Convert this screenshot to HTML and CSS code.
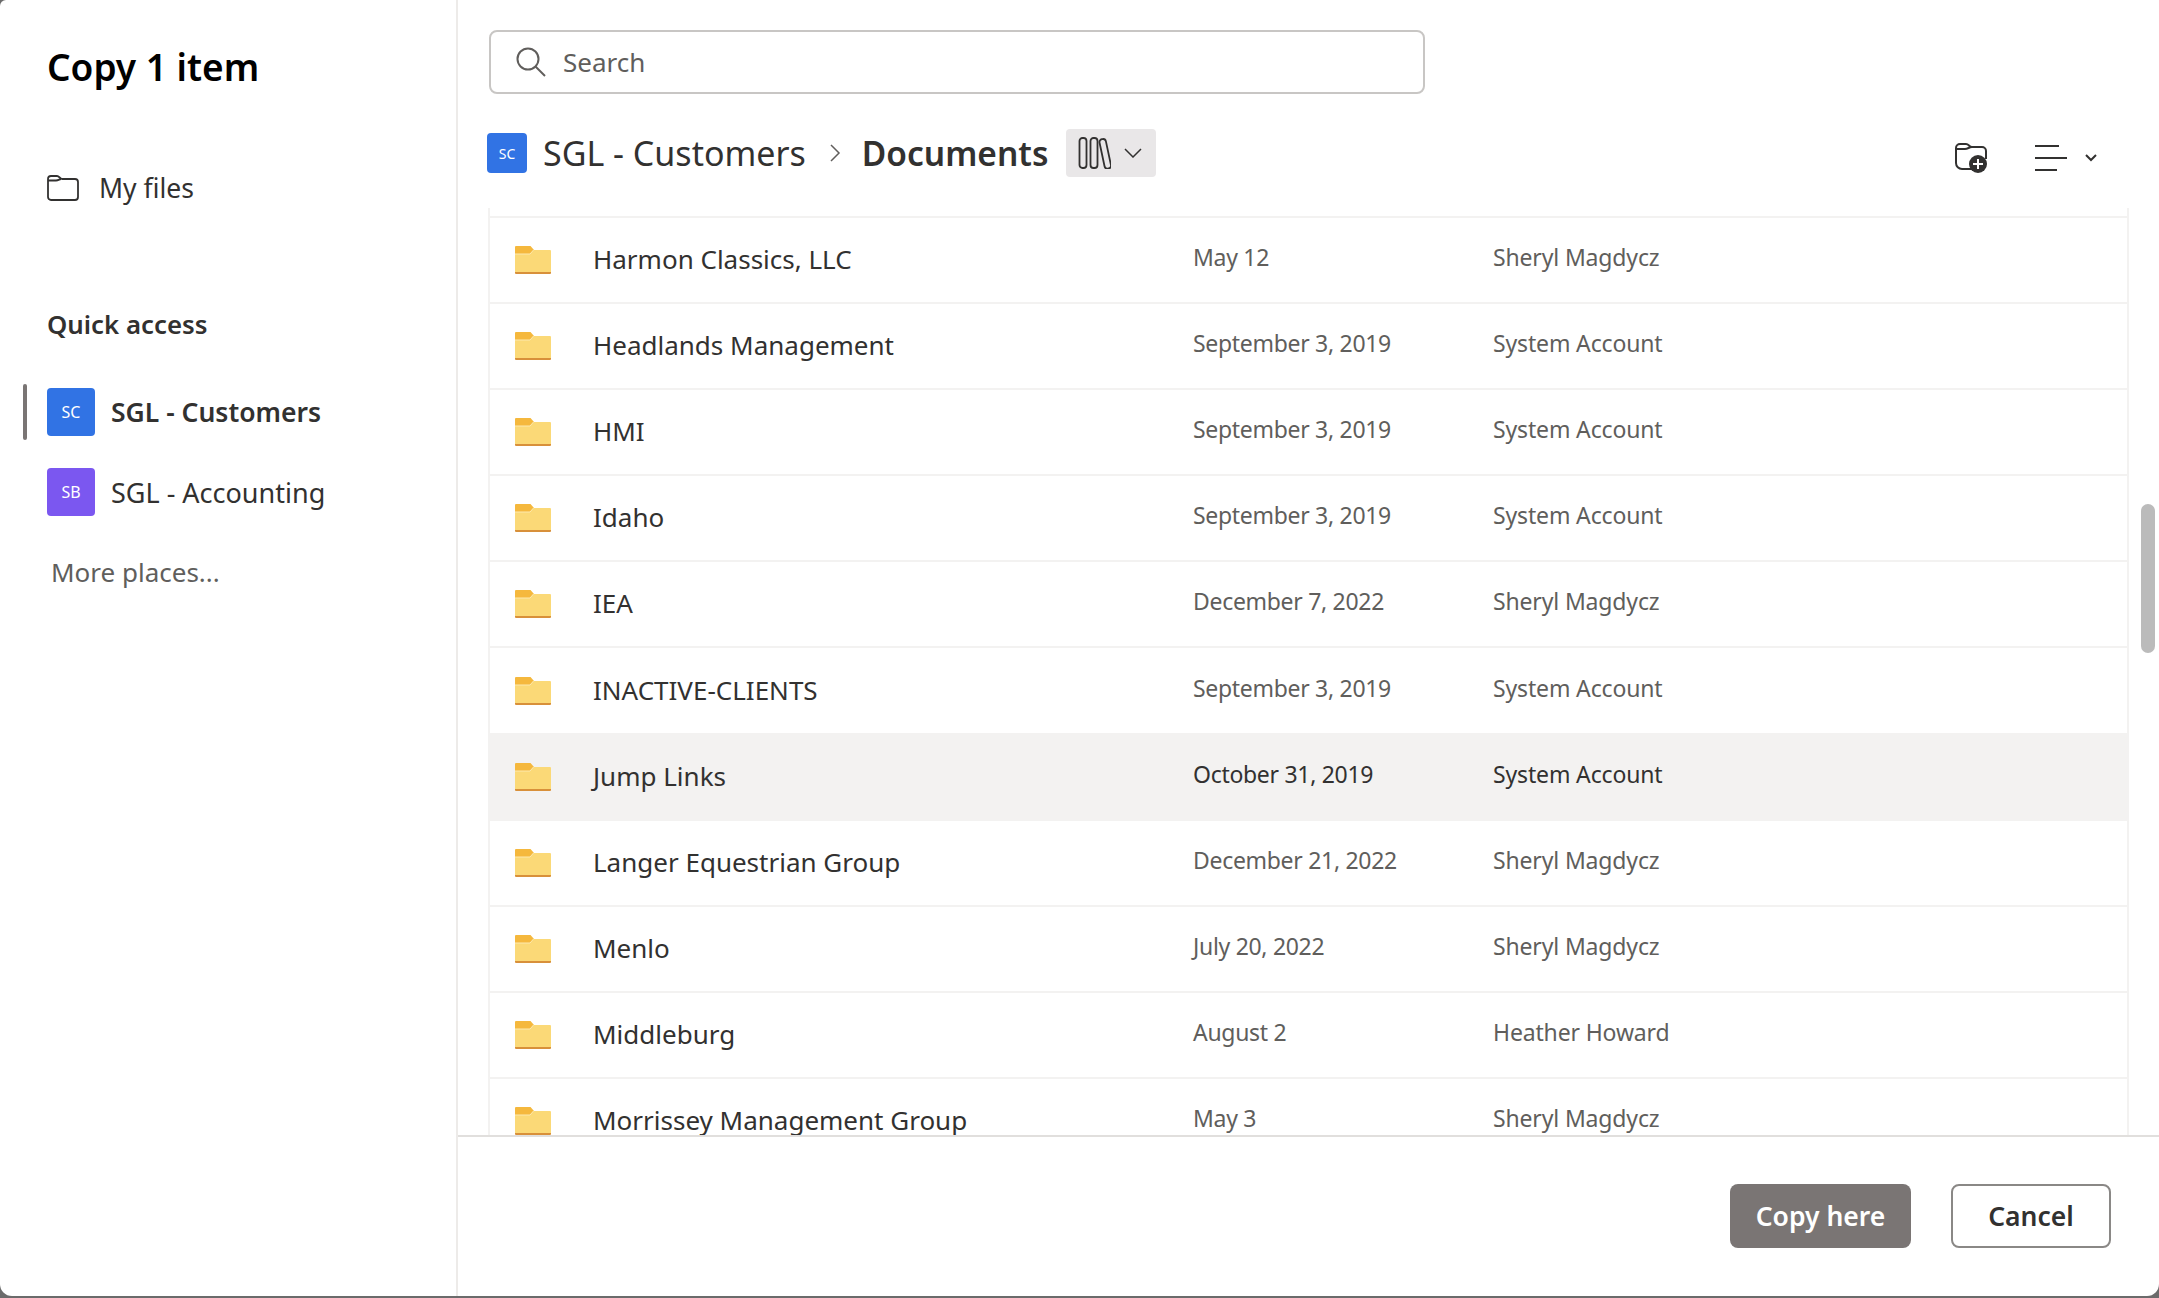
FILE: index.html
```html
<!DOCTYPE html>
<html lang="en">
<head>
  <meta charset="UTF-8">
  <title>Copy 1 item</title>
  <link rel="stylesheet" href="styles.css">
</head>
<body>
  <svg class="defs" width="0" height="0">
    <symbol id="folder" viewBox="0 0 36 28">
      <path d="M1 0h14.500l3.500 4v4H0V1a1 1 0 0 1 1-1z" fill="#f5b83d"/>
      <path d="M0 8h15l3.500-4H35a1 1 0 0 1 1 1v21.500H0z" fill="#fbd977"/>
      <path d="M0 8h15l3.500-4" fill="none" stroke="#fdeab0" stroke-width="1"/>
      <path d="M0 26h36v1a1 1 0 0 1-1 1H1a1 1 0 0 1-1-1z" fill="#d8903a"/>
    </symbol>
  </svg>

  <div class="dialog">
    <aside class="side">
      <h1 class="title">Copy 1 item</h1>
      <div class="my-files">
        <svg class="my-files-icon" viewBox="0 0 32 26" fill="none" stroke="#323130" stroke-width="1.800">
          <path d="M1 5V4a3 3 0 0 1 3-3h6c2 0 3 2.500 5 3h13a3 3 0 0 1 3 3v15a3 3 0 0 1-3 3H4a3 3 0 0 1-3-3z"/>
          <path d="M1 5.500h8c2.500 0 3.500-1.500 5-1.500"/>
        </svg>
        <span>My files</span>
      </div>
      <h2 class="quick-title">Quick access</h2>
      <div class="place active">
        <span class="site-tile blue">SC</span>
        <span>SGL - Customers</span>
      </div>
      <div class="place">
        <span class="site-tile purple">SB</span>
        <span>SGL - Accounting</span>
      </div>
      <div class="more">More places...</div>
    </aside>

    <main class="main">
      <div class="search">
        <svg class="search-icon" viewBox="0 0 30 30" fill="none" stroke="#605e5c" stroke-width="2">
          <circle cx="12" cy="12" r="10.500"/>
          <path d="M19.500 19.500L29 29"/>
        </svg>
        <span>Search</span>
      </div>

      <div class="crumbs">
        <span class="crumb-tile">SC</span>
        <span class="crumb-site">SGL - Customers</span>
        <svg class="crumb-sep" viewBox="0 0 12 20" fill="none" stroke="#605e5c" stroke-width="1.500">
          <path d="M2 2l8 8-8 8"/>
        </svg>
        <span class="crumb-lib">Documents</span>
        <div class="lib-btn">
          <svg class="lib-icon" viewBox="0 0 32 32" fill="none" stroke="#323130" stroke-width="1.800">
            <rect x="1" y="1" width="7" height="30" rx="3"/>
            <rect x="12" y="1" width="7" height="30" rx="3"/>
            <rect x="23.500" y="2" width="6.500" height="30" rx="3" transform="rotate(-12 26 17)"/>
          </svg>
          <svg class="lib-chev" viewBox="0 0 18 10" fill="none" stroke="#323130" stroke-width="1.500">
            <path d="M1 1l8 8 8-8"/>
          </svg>
        </div>
        <div class="tools">
          <svg class="new-folder" viewBox="0 0 32 30">
            <path d="M1 20V5a4 4 0 0 1 4-4h6c3 0 3 3 6 3h10a4 4 0 0 1 4 4v8M1 6h9c3 0 4-2 7-2M1 20a6 6 0 0 0 6 6h10" fill="none" stroke="#323130" stroke-width="2"/>
            <circle cx="23" cy="21" r="9" fill="#323130"/>
            <path d="M23 16v10M18 21h10" stroke="#fff" stroke-width="2"/>
          </svg>
          <div class="sort-lines">
            <i class="l1"></i><i class="l2"></i><i class="l3"></i>
          </div>
          <svg class="sort-chev" viewBox="0 0 12 8" fill="none" stroke="#323130" stroke-width="2">
            <path d="M1 1l5 5 5-5"/>
          </svg>
        </div>
      </div>

      <div class="list-area">
        <div class="list">
          <div class="row"><svg class="folder"><use href="#folder"/></svg><span class="name">Harmon Classics, LLC</span><span class="date">May 12</span><span class="author">Sheryl Magdycz</span></div>
          <div class="row"><svg class="folder"><use href="#folder"/></svg><span class="name">Headlands Management</span><span class="date">September 3, 2019</span><span class="author">System Account</span></div>
          <div class="row"><svg class="folder"><use href="#folder"/></svg><span class="name">HMI</span><span class="date">September 3, 2019</span><span class="author">System Account</span></div>
          <div class="row"><svg class="folder"><use href="#folder"/></svg><span class="name">Idaho</span><span class="date">September 3, 2019</span><span class="author">System Account</span></div>
          <div class="row"><svg class="folder"><use href="#folder"/></svg><span class="name">IEA</span><span class="date">December 7, 2022</span><span class="author">Sheryl Magdycz</span></div>
          <div class="row"><svg class="folder"><use href="#folder"/></svg><span class="name">INACTIVE-CLIENTS</span><span class="date">September 3, 2019</span><span class="author">System Account</span></div>
          <div class="row hover"><svg class="folder"><use href="#folder"/></svg><span class="name">Jump Links</span><span class="date">October 31, 2019</span><span class="author">System Account</span></div>
          <div class="row"><svg class="folder"><use href="#folder"/></svg><span class="name">Langer Equestrian Group</span><span class="date">December 21, 2022</span><span class="author">Sheryl Magdycz</span></div>
          <div class="row"><svg class="folder"><use href="#folder"/></svg><span class="name">Menlo</span><span class="date">July 20, 2022</span><span class="author">Sheryl Magdycz</span></div>
          <div class="row"><svg class="folder"><use href="#folder"/></svg><span class="name">Middleburg</span><span class="date">August 2</span><span class="author">Heather Howard</span></div>
          <div class="row"><svg class="folder"><use href="#folder"/></svg><span class="name">Morrissey Management Group</span><span class="date">May 3</span><span class="author">Sheryl Magdycz</span></div>
        </div>
        <div class="scroll-track"><div class="scroll-thumb"></div></div>
      </div>

      <div class="footer">
        <button class="btn primary">Copy here</button>
        <button class="btn">Cancel</button>
      </div>
    </main>
  </div>
</body>
</html>
```

FILE: styles.css
```css
* {
  box-sizing: border-box;
}
html, body {
  height: 100%;
}
body {
  margin: 0;
  height: 1298px;
  overflow: hidden;
  background: #6b6b6b;
  font-family: "Noto Sans", "Open Sans", sans-serif;
  color: #323130;
}
.defs {
  position: absolute;
}
.dialog {
  display: flex;
  height: 1296px;
  background: #fff;
  border-radius: 6px 0 12px 12px;
  overflow: hidden;
}

/* left pane */
.side {
  width: 458px;
  flex: none;
  border-right: 2px solid #edebe9;
  padding: 41px 0 0 47px;
}
.title {
  margin: 0;
  font-size: 37px;
  line-height: 52px;
  font-weight: 600;
  color: #000;
}
.my-files {
  display: flex;
  align-items: center;
  gap: 20px;
  height: 40px;
  margin-top: 75px;
  font-size: 26.500px;
}
.my-files-icon {
  width: 32px;
  height: 26px;
}
.quick-title {
  margin: 96px 0 0;
  font-size: 25.800px;
  line-height: 40px;
  font-weight: 600;
}
.place {
  position: relative;
  display: flex;
  align-items: center;
  gap: 16px;
  height: 48px;
  margin-top: 44px;
  font-size: 27px;
}
.place + .place {
  margin-top: 32px;
}
.place.active {
  font-size: 26.500px;
  font-weight: 600;
}
.place.active::before {
  content: "";
  position: absolute;
  left: -24px;
  top: -4px;
  width: 4px;
  height: 56px;
  border-radius: 2px;
  background: #7a7574;
}
.site-tile {
  display: flex;
  align-items: center;
  justify-content: center;
  width: 48px;
  height: 48px;
  border-radius: 4px;
  font-size: 16px;
  font-weight: 400;
  color: #fff;
}
.blue {
  background: #3173e4;
}
.purple {
  background: #7b57f0;
}
.more {
  margin: 36px 0 0 4px;
  font-size: 26px;
  line-height: 40px;
  color: #605e5c;
}

/* right pane */
.main {
  flex: 1;
  display: flex;
  flex-direction: column;
  min-width: 0;
}
.search {
  display: flex;
  align-items: center;
  gap: 17px;
  width: 936px;
  height: 64px;
  margin: 30px 0 0 31px;
  padding-left: 25px;
  border: 2px solid #c8c6c4;
  border-radius: 8px;
  font-size: 26px;
  color: #605e5c;
}
.search-icon {
  width: 30px;
  height: 30px;
}
.crumbs {
  display: flex;
  align-items: center;
  height: 48px;
  margin: 35px 0 0 29px;
  font-size: 34px;
}
.crumb-tile {
  display: flex;
  align-items: center;
  justify-content: center;
  width: 40px;
  height: 40px;
  margin-right: 16px;
  border-radius: 4px;
  background: #3173e4;
  color: #fff;
  font-size: 14px;
}
.crumb-sep {
  width: 12px;
  height: 20px;
  margin: 0 21px 0 23px;
}
.crumb-lib {
  font-size: 33.500px;
  font-weight: 600;
}
.lib-btn {
  display: flex;
  align-items: center;
  gap: 13px;
  width: 90px;
  height: 48px;
  margin-left: 18px;
  padding-left: 12px;
  border-radius: 4px;
  background: #e9e7e8;
}
.lib-icon {
  width: 33px;
  height: 32px;
}
.lib-chev {
  width: 18px;
  height: 10px;
}
.tools {
  display: flex;
  align-items: center;
  margin-left: auto;
  margin-top: 10px;
  padding-right: 62px;
}
.new-folder {
  width: 32px;
  height: 30px;
  margin-right: 48px;
}
.sort-lines {
  display: flex;
  flex-direction: column;
  gap: 10px;
  width: 32px;
  margin-right: 18px;
}
.sort-lines i {
  display: block;
  height: 2px;
  background: #323130;
}
.sort-lines .l1 {
  width: 24px;
}
.sort-lines .l3 {
  width: 22px;
}
.sort-chev {
  width: 12px;
  height: 8px;
}

/* folder list */
.list-area {
  position: relative;
  flex: 1;
  min-height: 0;
  margin-top: 31px;
  overflow: hidden;
}
.list {
  width: 1641px;
  height: 100%;
  margin-left: 30px;
  padding-top: 8px;
  border-left: 2px solid #f3f2f1;
  border-right: 2px solid #f3f2f1;
  overflow: hidden;
}
.row {
  display: flex;
  align-items: center;
  height: 86.100px;
  border-top: 2px solid #f3f2f1;
  padding-left: 25px;
  font-size: 26px;
}
.row.hover {
  background: #f3f2f1;
}
.folder {
  width: 36px;
  height: 28px;
  flex: none;
}
.name {
  width: 600px;
  margin: 0 0 2px 42px;
  flex: none;
}
.date {
  width: 300px;
  flex: none;
  margin-bottom: 6px;
  font-size: 23px;
  letter-spacing: -0.300px;
  color: #605e5c;
}
.author {
  margin-bottom: 6px;
  font-size: 23px;
  letter-spacing: -0.150px;
  color: #605e5c;
}
.row.hover .date,
.row.hover .author {
  color: #323130;
}
.scroll-track {
  position: absolute;
  top: 296px;
  right: 4px;
  width: 14px;
}
.scroll-thumb {
  height: 149px;
  border-radius: 7px;
  background: #bbb;
}

.footer {
  display: flex;
  justify-content: flex-end;
  gap: 40px;
  height: 161px;
  padding: 47px 48px 0 0;
  border-top: 2px solid #e1dfdd;
  flex: none;
}
.btn {
  width: 160px;
  height: 64px;
  padding-bottom: 2px;
  border: 2px solid #8a8886;
  border-radius: 8px;
  background: #fff;
  font-family: inherit;
  font-size: 26.500px;
  font-weight: 600;
  color: #323130;
}
.btn.primary {
  width: 181px;
  border: none;
  background: #7a7574;
  color: #fff;
}
```
